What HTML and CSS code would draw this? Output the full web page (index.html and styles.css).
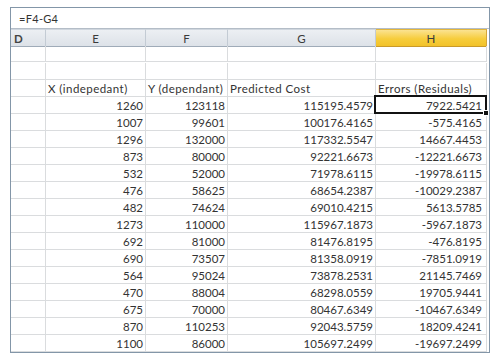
FILE: index.html
```html
<!DOCTYPE html>
<html>
<head>
<meta charset="utf-8">
<link rel="stylesheet" href="styles.css">
</head>
<body>
<div class="sheet">
  <div class="fbar"><span class="ftext">=F4-G4</span></div>
  <div class="grid">
    <div class="hd hd-d">D</div>
    <div class="hd">E</div>
    <div class="hd">F</div>
    <div class="hd">G</div>
    <div class="hd hd-sel">H</div>

    <div class="c r1"></div><div class="c r1"></div><div class="c r1"></div><div class="c r1"></div><div class="c r1"></div>
    <div class="c"></div><div class="c"></div><div class="c"></div><div class="c"></div><div class="c"></div>
    <div class="c"></div><div class="c t">X (indepedant)</div><div class="c t">Y (dependant)</div><div class="c t">Predicted Cost</div><div class="c t">Errors (Residuals)</div>

    <div class="c"></div><div class="c n">1260</div><div class="c n">123118</div><div class="c n">115195.4579</div><div class="c n h sel">7922.5421</div>
    <div class="c"></div><div class="c n">1007</div><div class="c n">99601</div><div class="c n">100176.4165</div><div class="c n h">-575.4165</div>
    <div class="c"></div><div class="c n">1296</div><div class="c n">132000</div><div class="c n">117332.5547</div><div class="c n h">14667.4453</div>
    <div class="c"></div><div class="c n">873</div><div class="c n">80000</div><div class="c n">92221.6673</div><div class="c n h">-12221.6673</div>
    <div class="c"></div><div class="c n">532</div><div class="c n">52000</div><div class="c n">71978.6115</div><div class="c n h">-19978.6115</div>
    <div class="c"></div><div class="c n">476</div><div class="c n">58625</div><div class="c n">68654.2387</div><div class="c n h">-10029.2387</div>
    <div class="c"></div><div class="c n">482</div><div class="c n">74624</div><div class="c n">69010.4215</div><div class="c n h">5613.5785</div>
    <div class="c"></div><div class="c n">1273</div><div class="c n">110000</div><div class="c n">115967.1873</div><div class="c n h">-5967.1873</div>
    <div class="c"></div><div class="c n">692</div><div class="c n">81000</div><div class="c n">81476.8195</div><div class="c n h">-476.8195</div>
    <div class="c"></div><div class="c n">690</div><div class="c n">73507</div><div class="c n">81358.0919</div><div class="c n h">-7851.0919</div>
    <div class="c"></div><div class="c n">564</div><div class="c n">95024</div><div class="c n">73878.2531</div><div class="c n h">21145.7469</div>
    <div class="c"></div><div class="c n">470</div><div class="c n">88004</div><div class="c n">68298.0559</div><div class="c n h">19705.9441</div>
    <div class="c"></div><div class="c n">675</div><div class="c n">70000</div><div class="c n">80467.6349</div><div class="c n h">-10467.6349</div>
    <div class="c"></div><div class="c n">870</div><div class="c n">110253</div><div class="c n">92043.5759</div><div class="c n h">18209.4241</div>
    <div class="c"></div><div class="c n">1100</div><div class="c n">86000</div><div class="c n">105697.2499</div><div class="c n h">-19697.2499</div>
  </div>
</div>
</body>
</html>
```
FILE: styles.css
```css
html, body {
  margin: 0;
  padding: 0;
  background: #ffffff;
}
body {
  padding: 7px 0 0 10px;
  font-family: Lato, "Open Sans", sans-serif;
  font-size: 11.5px;
  color: #333333;
}
.sheet {
  width: 480px;
  box-sizing: border-box;
  border: 1px solid #8396a8;
  background: #ffffff;
}
.fbar {
  height: 20px;
  border-bottom: 1px solid #b4bdc7;
  display: flex;
  align-items: center;
  padding-left: 8px;
  background: #ffffff;
}
.ftext {
  font-size: 11px;
  letter-spacing: 0.3px;
  color: #333;
}
.grid {
  display: grid;
  grid-template-columns: 35px 100px 82px 148px 111px;
  grid-auto-rows: 17px;
}
.hd {
  height: 18px;
  box-sizing: border-box;
  border-top: 1px solid #cfd6de;
  border-bottom: 1px solid #9fabb8;
  border-right: 1px solid #c3cbd4;
  background: linear-gradient(#eceff3, #dde2e8);
  text-align: center;
  line-height: 17px;
  font-size: 11.5px;
  color: #3a3a3a;
}
.hd-d {
  text-align: left;
  padding-left: 3px;
  font-weight: bold;
  color: #444;
}
.hd-sel {
  background: linear-gradient(#fbe391, #f6cd3c 55%, #f2c22a);
  border-top-color: #e2b53a;
  border-bottom-color: #c99a2a;
  border-right-color: #d4a63a;
}
.c {
  box-sizing: border-box;
  border-right: 1px solid #dadcde;
  border-bottom: 1px solid #dadcde;
  line-height: 15px;
  padding-top: 1px;
  white-space: nowrap;
  overflow: visible;
}
.r1 {
  height: 16px;
  margin-bottom: -1px;
}
.t {
  padding-left: 2px;
  letter-spacing: 0.45px;
}
.n {
  text-align: right;
  padding-right: 2px;
}
.h {
  padding-right: 4px;
}
.sel {
  position: relative;
}
.sel::after {
  content: "";
  position: absolute;
  left: -2px;
  top: -2px;
  right: -1px;
  bottom: -1px;
  border: 2px solid #111;
}
.sel::before {
  content: "";
  position: absolute;
  right: -3px;
  bottom: -3px;
  width: 4px;
  height: 4px;
  background: #111;
  border: 1px solid #fff;
  z-index: 2;
}
```
